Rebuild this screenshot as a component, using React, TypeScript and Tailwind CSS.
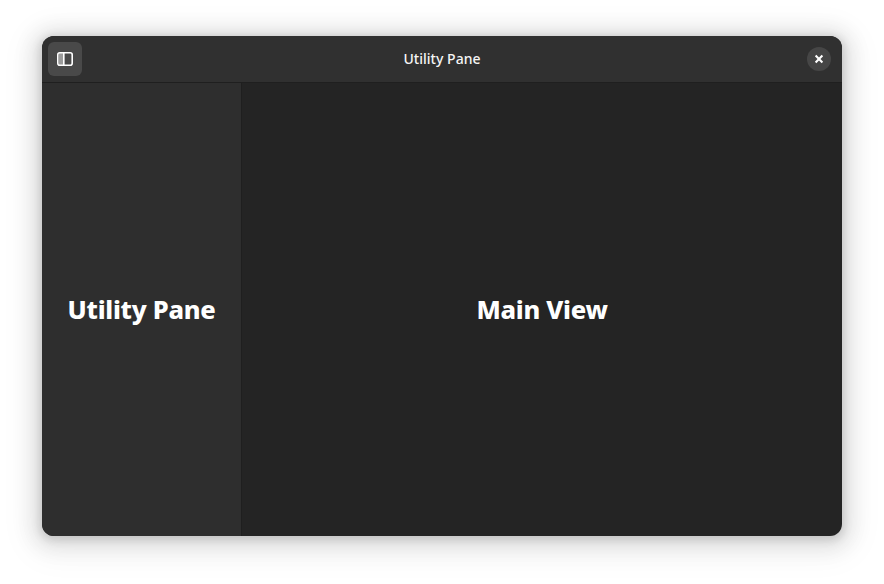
export default function App() {
  return (
    <div className="w-[884px] h-[584px] bg-white pl-[42px] pt-[36px] overflow-hidden" style={{ fontFamily: '"Noto Sans", sans-serif' }}>
      <div className="w-[800px] h-[500px] flex flex-col rounded-[12px] overflow-hidden bg-[#242424] text-white shadow-[0_2px_8px_2px_rgba(0,0,0,0.13),0_3px_20px_10px_rgba(0,0,0,0.09),0_6px_32px_16px_rgba(0,0,0,0.04)]">
        <div className="h-[47px] shrink-0 grid grid-cols-[1fr_auto_1fr] items-center bg-[#303030] border-b border-[#1f1f1f]">
          <div className="flex justify-start pl-[6px]">
            <div className="w-[34px] h-[34px] rounded-[6px] bg-[#494949] flex items-center justify-center">
              <svg width="16" height="16" viewBox="0 0 16 16">
                <rect x="2" y="2" width="4.5" height="12" fill="#fff" opacity="0.45" />
                <rect x="0.8" y="1.8" width="14.4" height="12.4" rx="2" fill="none" stroke="#fff" strokeWidth="1.6" />
                <rect x="6" y="2" width="1.6" height="12" fill="#fff" />
              </svg>
            </div>
          </div>
          <div className="text-[14px] font-[550] leading-none text-[#f5f5f5] tracking-[0.03px]">Utility Pane</div>
          <div className="flex justify-end pr-[11px]">
            <div className="w-6 h-6 rounded-full bg-[#464646] flex items-center justify-center">
              <svg width="16" height="16" viewBox="0 0 16 16">
                <path d="M4.6 4.6 L11.4 11.4 M11.4 4.6 L4.6 11.4" stroke="#fff" strokeWidth="2.1" />
              </svg>
            </div>
          </div>
        </div>
        <div className="flex-1 flex min-h-0">
          <div className="w-[200px] shrink-0 flex items-center justify-center bg-[#2e2e2e] border-r border-[#1f1f1f]">
            <span className="text-[25.5px] font-extrabold tracking-[-0.28px]">Utility Pane</span>
          </div>
          <div className="flex-1 flex items-center justify-center">
            <span className="text-[25.5px] font-extrabold tracking-[-0.28px]">Main View</span>
          </div>
        </div>
      </div>
    </div>
  );
}
